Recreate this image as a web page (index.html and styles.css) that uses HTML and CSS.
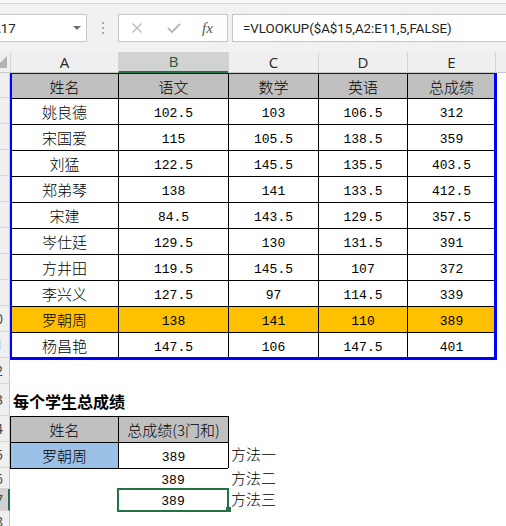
FILE: index.html
```html
<!DOCTYPE html>
<html>
<head>
<meta charset="utf-8">
<title>学生成绩 VLOOKUP</title>
<link rel="stylesheet" href="styles.css">
</head>
<body>
<div class="topline"></div>
<div class="toolbar">
  <div class="namebox"><span>A17</span><span class="caret"></span></div>
  <div class="grip"><i></i><i></i><i></i></div>
  <div class="fxbox">
    <svg class="ic-x" width="10" height="10" viewBox="0 0 10 10"><path d="M0.5 0.5 L9.5 9.5 M9.5 0.5 L0.5 9.5" stroke="#b9b9b9" stroke-width="1.3" fill="none"/></svg>
    <svg class="ic-ok" width="14" height="10" viewBox="0 0 14 10"><path d="M1 5 L5 9 L13 1" stroke="#b9b9b9" stroke-width="2" fill="none"/></svg>
    <span class="fx">fx</span>
  </div>
  <div class="formula">=VLOOKUP($A$15,A2:E11,5,FALSE)</div>
</div>

<div class="row colheads">
  <div class="corner"><span class="tri"></span></div>
  <div class="ch">A</div>
  <div class="ch sel">B</div>
  <div class="ch">C</div>
  <div class="ch">D</div>
  <div class="ch">E</div>
  <div class="ch"></div>
</div>

<div class="data">
  <div class="row r1">
    <div class="rh"><span>1</span></div>
    <div class="c hd">姓名</div><div class="c hd">语文</div><div class="c hd">数学</div><div class="c hd">英语</div><div class="c hd">总成绩</div><div></div>
  </div>
  <div class="row rd">
    <div class="rh"><span>2</span></div>
    <div class="c">姚良德</div><div class="c n">102.5</div><div class="c n">103</div><div class="c n">106.5</div><div class="c n">312</div><div></div>
  </div>
  <div class="row rd">
    <div class="rh"><span>3</span></div>
    <div class="c">宋国爱</div><div class="c n">115</div><div class="c n">105.5</div><div class="c n">138.5</div><div class="c n">359</div><div></div>
  </div>
  <div class="row rd">
    <div class="rh"><span>4</span></div>
    <div class="c">刘猛</div><div class="c n">122.5</div><div class="c n">145.5</div><div class="c n">135.5</div><div class="c n">403.5</div><div></div>
  </div>
  <div class="row rd">
    <div class="rh"><span>5</span></div>
    <div class="c">郑弟琴</div><div class="c n">138</div><div class="c n">141</div><div class="c n">133.5</div><div class="c n">412.5</div><div></div>
  </div>
  <div class="row rd">
    <div class="rh"><span>6</span></div>
    <div class="c">宋建</div><div class="c n">84.5</div><div class="c n">143.5</div><div class="c n">129.5</div><div class="c n">357.5</div><div></div>
  </div>
  <div class="row rd">
    <div class="rh"><span>7</span></div>
    <div class="c">岑仕廷</div><div class="c n">129.5</div><div class="c n">130</div><div class="c n">131.5</div><div class="c n">391</div><div></div>
  </div>
  <div class="row rd">
    <div class="rh"><span>8</span></div>
    <div class="c">方井田</div><div class="c n">119.5</div><div class="c n">145.5</div><div class="c n">107</div><div class="c n">372</div><div></div>
  </div>
  <div class="row rd">
    <div class="rh"><span>9</span></div>
    <div class="c">李兴义</div><div class="c n">127.5</div><div class="c n">97</div><div class="c n">114.5</div><div class="c n">339</div><div></div>
  </div>
  <div class="row rd hl">
    <div class="rh"><span>10</span></div>
    <div class="c">罗朝周</div><div class="c n">138</div><div class="c n">141</div><div class="c n">110</div><div class="c n">389</div><div></div>
  </div>
  <div class="row rd">
    <div class="rh"><span>11</span></div>
    <div class="c">杨昌艳</div><div class="c n">147.5</div><div class="c n">106</div><div class="c n">147.5</div><div class="c n">401</div><div></div>
  </div>
</div>

<div class="row r12">
  <div class="rh"><span>12</span></div><div></div><div></div><div></div><div></div><div></div><div></div>
</div>
<div class="row r13">
  <div class="rh"><span>13</span></div>
  <div class="title">每个学生总成绩</div><div></div><div></div><div></div><div></div><div></div>
</div>
<div class="row r14">
  <div class="rh"><span>14</span></div>
  <div class="c hd">姓名</div><div class="c hd">总成绩(3门和)</div><div class="bl"></div><div></div><div></div><div></div>
</div>
<div class="row r15">
  <div class="rh"><span>15</span></div>
  <div class="c blue">罗朝周</div><div class="c n">389</div><div class="bl lab">方法一</div><div></div><div></div><div></div>
</div>
<div class="row r16">
  <div class="rh"><span>16</span></div>
  <div class="bt"></div><div class="bt v n">389</div><div class="lab">方法二</div><div></div><div></div><div></div>
</div>
<div class="row r17">
  <div class="rh sel"><span>17</span></div>
  <div></div><div class="v n pick">389<span class="handle"></span></div><div class="lab">方法三</div><div></div><div></div><div></div>
</div>
<div class="row r18">
  <div class="rh"><span>18</span></div><div></div><div></div><div></div><div></div><div></div><div></div>
</div>
</body>
</html>
```

FILE: styles.css
```css
body {
  margin: 0;
  width: 506px;
  height: 526px;
  overflow: hidden;
  background: #fff;
  color: #000;
  font-family: "Noto Sans CJK SC", sans-serif;
}

/* formula bar */
.topline {
  height: 3px;
  background: #f7f7f7;
  border-bottom: 1px solid #d6d6d6;
}

.toolbar {
  display: flex;
  align-items: center;
  height: 48px;
  background: #f1f1f1;
  font-family: Roboto, "Liberation Sans", sans-serif;
  font-size: 13.3px;
  color: #222;
}

.namebox {
  box-sizing: border-box;
  width: 99px;
  height: 28px;
  margin-left: -12px;
  padding: 0 5px 0 3px;
  display: flex;
  align-items: center;
  justify-content: space-between;
  background: #fff;
  border: 1px solid #c6c6c6;
}

.caret {
  width: 0;
  height: 0;
  border-left: 4px solid transparent;
  border-right: 4px solid transparent;
  border-top: 4px solid #6f6f6f;
}

.grip {
  display: flex;
  flex-direction: column;
  gap: 3px;
  margin-left: 15px;
}

.grip i {
  display: block;
  width: 2px;
  height: 2px;
  background: #a6a6a6;
}

.fxbox {
  box-sizing: border-box;
  width: 110px;
  height: 28px;
  margin-left: 14px;
  display: flex;
  align-items: center;
  background: #fff;
  border: 1px solid #c6c6c6;
}

.ic-x { margin-left: 13px; }
.ic-ok { margin-left: 25px; }

.fx {
  margin-left: 21px;
  font-family: "Liberation Serif", serif;
  font-style: italic;
  font-size: 15px;
  color: #555;
}

.formula {
  flex: 1;
  box-sizing: border-box;
  height: 28px;
  margin-left: 4px;
  margin-right: -10px;
  padding-left: 10px;
  display: flex;
  align-items: center;
  background: #fff;
  border: 1px solid #c6c6c6;
}

/* sheet grid */
.row {
  display: grid;
  grid-template-columns: 10px 108px 110px 90px 89px 88px 1fr;
}

.colheads { height: 21px; }

.corner {
  box-sizing: border-box;
  background: #efefef;
  border-bottom: 1px solid #c8c8c8;
  overflow: hidden;
  display: flex;
  align-items: flex-end;
  justify-content: flex-end;
  padding: 0 3px 4px 0;
}

.tri {
  flex: none;
  width: 0;
  height: 0;
  border-bottom: 12px solid #b4b4b4;
  border-left: 12px solid transparent;
}

.ch {
  box-sizing: border-box;
  background: #efefef;
  border-left: 1px solid #d4d4d4;
  border-bottom: 1px solid #c8c8c8;
  display: flex;
  align-items: center;
  justify-content: center;
  font-family: "Open Sans", sans-serif;
  font-size: 15px;
  line-height: 1;
  color: #262626;
}

.ch.sel {
  background: #d2d2d2;
  border-bottom: 2px solid #217346;
  color: #1d5c38;
}

.rh {
  box-sizing: border-box;
  background: #efefef;
  border-right: 1px solid #c6c6c6;
  border-bottom: 1px solid #d4d4d4;
  overflow: hidden;
  display: flex;
  align-items: center;
  font-family: "Open Sans", sans-serif;
  font-size: 14px;
  color: #444;
}

.rh span {
  flex: none;
  width: 28px;
  margin-left: -19px;
  text-align: center;
}

.rh.sel {
  background: #d2d2d2;
  border-right: 2px solid #217346;
}

.r1 { height: 25px; }
.rd { height: 26px; }
.r12 { height: 26px; }
.r13 { height: 32px; }
.r14 { height: 26px; }
.r15 { height: 26px; }
.r16 { height: 21px; }
.r17 { height: 22px; }
.r18 { height: 22px; }

.c {
  box-sizing: border-box;
  border-left: 1px solid #000;
  border-top: 1px solid #000;
  display: flex;
  align-items: center;
  justify-content: center;
  font-size: 15px;
  font-weight: 300;
  line-height: 1;
  white-space: nowrap;
}

.n {
  font-family: "Liberation Mono", monospace;
  font-size: 13px;
  font-weight: normal;
  padding-top: 3px;
}

.hd { background: #c0c0c0; }
.hl .c { background: #ffc000; }
.blue { background: #9bc2e6; }

.data { position: relative; }

.data::after {
  content: "";
  position: absolute;
  left: 10px;
  top: 0;
  width: 487px;
  bottom: -2px;
  box-sizing: border-box;
  border-style: solid;
  border-color: #0000ff;
  border-width: 1px 3px 3px 2px;
  pointer-events: none;
}

.title {
  display: flex;
  align-items: center;
  padding: 2px 0 0 3px;
  font-size: 16px;
  font-weight: bold;
  line-height: 1;
  white-space: nowrap;
}

.bl { border-left: 1px solid #000; }
.bt { border-top: 1px solid #000; }

.v {
  display: flex;
  align-items: center;
  justify-content: center;
  line-height: 1;
}

.lab {
  display: flex;
  align-items: center;
  padding: 0 0 3px 3px;
  font-size: 15px;
  font-weight: 300;
  line-height: 1;
  white-space: nowrap;
}

.bl.lab { padding-left: 2px; }

.pick { position: relative; }

.pick::after {
  content: "";
  position: absolute;
  top: -1px;
  left: -1px;
  right: -1px;
  bottom: -1px;
  border: 2px solid #217346;
}

.handle {
  position: absolute;
  right: -3px;
  bottom: -1px;
  width: 5px;
  height: 5px;
  background: #217346;
  z-index: 1;
}
```
